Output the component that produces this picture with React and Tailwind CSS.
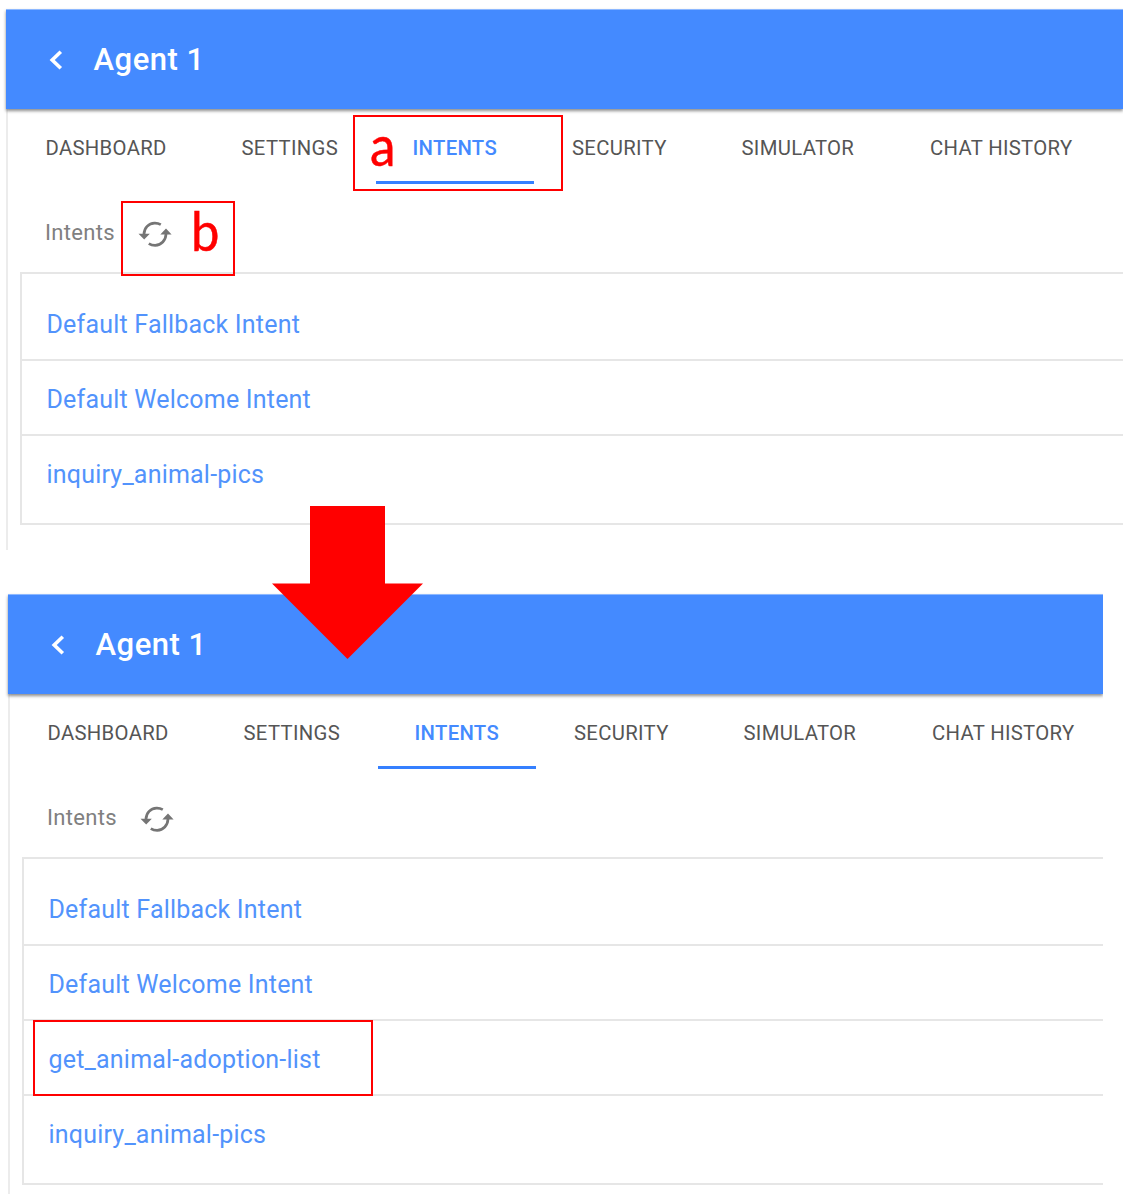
import React from "react";

const TABS = [
  { label: "DASHBOARD", width: "w-[196px]" },
  { label: "SETTINGS", width: "w-[172px]" },
  { label: "INTENTS", width: "w-[158.5px]", active: true },
  { label: "SECURITY", width: "w-[169.5px]" },
  { label: "SIMULATOR", width: "w-[188.5px]" },
  { label: "CHAT HISTORY", width: "w-[218px]" },
];

function RefreshIcon() {
  return (
    <svg className="mt-[1px] h-[28px] w-[34px]" viewBox="0 0 34 28" fill="none">
      <path d="M6 14C6.2 8 10.5 3.3 16.5 3.1C18.9 3 21 3.6 22.8 4.6" stroke="#757575" strokeWidth="2.7" />
      <path d="M28 14C27.8 20.3 23.2 25.2 17.2 25.4C14.8 25.4 12.6 24.8 10.8 23.7" stroke="#757575" strokeWidth="2.7" />
      <path d="M0.5 13.8H11.8L6.2 19.6Z M22.3 14.4H33.6L28 8.6Z" fill="#757575" />
    </svg>
  );
}

function AgentPanel({ intents, className }) {
  return (
    <section className={className}>
      <header className="relative z-10 flex h-[100px] items-center border-t border-[#8db8ff] bg-[#448aff] pl-[43px] shadow-[0_2px_3px_rgba(0,0,0,0.45)]">
        <svg className="h-5 w-[14px]" viewBox="0 0 14 20" fill="none">
          <path d="M11.8 1.8L3.2 10L11.8 18.2" stroke="white" strokeWidth="3.6" />
        </svg>
        <h1 className="mt-[1px] ml-[30.5px] text-[31px] leading-9 font-medium tracking-[0.5px] text-white">Agent 1</h1>
      </header>
      <div className="border-l-2 border-[#ececec]">
        <nav className="flex h-[75px] w-[1110px]">
          {TABS.map((tab) => (
            <div
              key={tab.label}
              className={`${tab.width} flex shrink-0 flex-col text-[20.3px] leading-6 tracking-[0.32px] whitespace-nowrap ${tab.active ? "font-medium text-[#448aff]" : "text-[#555]"}`}
            >
              <span className={`mt-[27px] ${tab.active ? "ml-[36.5px]" : "ml-[37.5px]"}`}>{tab.label}</span>
              {tab.active && <span className="mt-[21px] h-[3px] w-[158px] bg-[#3580ff]" />}
            </div>
          ))}
        </nav>
        <div className="flex h-[88px] items-start pt-[35px] pl-[37px]">
          <h2 className="w-[93px] text-[22px] leading-[28px] tracking-[0.3px] text-[#808080]">Intents</h2>
          <RefreshIcon />
        </div>
        <ul className="ml-[12px] border-y-2 border-l-2 border-[#e6e6e6] pt-[12px] pb-[12px]">
          {intents.map((name, i) => (
            <li
              key={name}
              className={`flex h-[75px] items-start pt-[23px] pl-[24.5px] text-[25px] leading-8 tracking-[0.2px] text-[#5293fc] ${i < intents.length - 1 ? "border-b-2 border-[#e6e6e6]" : ""}`}
            >
              {name}
            </li>
          ))}
        </ul>
        <div className="h-[25px]" />
      </div>
    </section>
  );
}

export default function App() {
  return (
    <main className="relative h-[1194px] w-[1123px] overflow-hidden bg-white font-['Roboto',sans-serif]">
      <AgentPanel
        className="ml-[6px] h-[541px] pt-[9px]"
        intents={["Default Fallback Intent", "Default Welcome Intent", "inquiry_animal-pics"]}
      />
      <AgentPanel
        className="mt-[44px] ml-[8px] w-[1095px] pt-[9px] [clip-path:inset(0_0_0_-4px)]"
        intents={["Default Fallback Intent", "Default Welcome Intent", "get_animal-adoption-list", "inquiry_animal-pics"]}
      />

      {/* Annotations laid over the two panels */}
      <div className="absolute top-[115px] left-[353px] z-20 h-[76px] w-[210px] border-2 border-[#ff0000]">
        <span className="absolute top-[-3px] left-[14.5px] origin-left scale-x-[0.9] font-['Lato',sans-serif] text-[57px] leading-[60px] text-[#ff0000] [-webkit-text-stroke:0.5px_#ff0000]">a</span>
      </div>
      <div className="absolute top-[201px] left-[121px] z-20 h-[75px] w-[114px] border-2 border-[#ff0000]">
        <span className="absolute top-[-2px] left-[68px] origin-left scale-x-[0.94] font-['Lato',sans-serif] text-[54px] leading-[60px] text-[#ff0000] [-webkit-text-stroke:0.5px_#ff0000]">b</span>
      </div>
      <svg className="absolute top-[506px] left-[272px] z-20 h-[153px] w-[151px]" viewBox="0 0 151 153">
        <path d="M38 0H113V77.5H151L75.5 153L0 77.5H38Z" fill="#ff0000" />
      </svg>
      <div className="absolute top-[1020px] left-[33px] z-20 h-[76px] w-[340px] border-2 border-[#ff0000]" />
    </main>
  );
}
